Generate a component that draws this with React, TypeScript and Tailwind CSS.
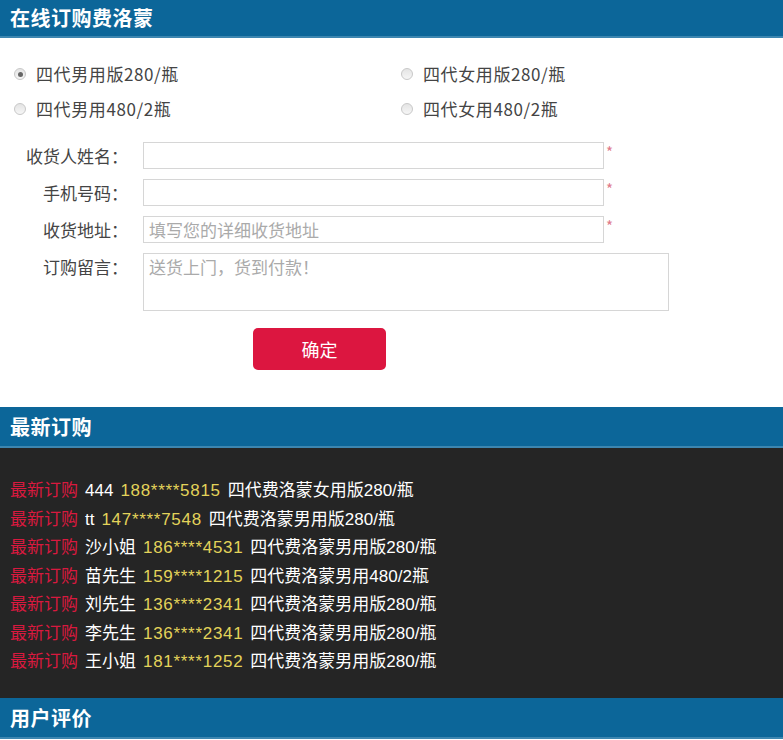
const FONT = { fontFamily: '"Noto Sans CJK SC", "Noto Sans", sans-serif' };
const MIXED = { fontFamily: '"Liberation Sans", "Noto Sans CJK SC", sans-serif' };

const options = [
  { label: "四代男用版280/瓶", checked: true },
  { label: "四代女用版280/瓶", checked: false },
  { label: "四代男用480/2瓶", checked: false },
  { label: "四代女用480/2瓶", checked: false },
];

const orders = [
  { name: "444", phone: "188****5815", item: "四代费洛蒙女用版280/瓶" },
  { name: "tt", phone: "147****7548", item: "四代费洛蒙男用版280/瓶" },
  { name: "沙小姐", phone: "186****4531", item: "四代费洛蒙男用版280/瓶" },
  { name: "苗先生", phone: "159****1215", item: "四代费洛蒙男用480/2瓶" },
  { name: "刘先生", phone: "136****2341", item: "四代费洛蒙男用版280/瓶" },
  { name: "李先生", phone: "136****2341", item: "四代费洛蒙男用版280/瓶" },
  { name: "王小姐", phone: "181****1252", item: "四代费洛蒙男用版280/瓶" },
];

function SectionTitle({ title, tall = false }: { title: string; tall?: boolean }) {
  return (
    <div
      className={`bg-[#0c6699] border-b-2 border-[#3d86b0] flex items-center pl-[10px] ${tall ? "h-[41px]" : "h-[38px]"}`}
    >
      <h2 className="text-white text-[20px] font-bold tracking-[0.5px]">{title}</h2>
    </div>
  );
}

function Radio({ checked }: { checked: boolean }) {
  return (
    <span className="w-[12px] h-[12px] rounded-full border border-[#c8c8c8] bg-gradient-to-b from-[#e4e4e4] to-[#f6f6f6] flex items-center justify-center">
      {checked && <span className="w-[5px] h-[5px] rounded-full bg-[#666]" />}
    </span>
  );
}

function Field({ label, placeholder, required = true, area = false }: { label: string; placeholder?: string; required?: boolean; area?: boolean }) {
  return (
    <div className="flex items-start">
      <label className="w-[128px] text-right text-[17px] text-[#444] leading-[27px] shrink-0">{label}</label>
      <div className="ml-[15px] flex items-start">
        {area ? (
          <div className="w-[526px] h-[58px] border border-[#d6d6d6] px-[5px] pt-[2px] text-[17px] text-[#aaa] leading-[22px]">
            {placeholder}
          </div>
        ) : (
          <div className="w-[461px] h-[27px] border border-[#d6d6d6] px-[5px] text-[17px] text-[#aaa] leading-[25px]">
            {placeholder}
          </div>
        )}
        {required && <span className="text-[#e07a8a] text-[15px] leading-[20px] ml-[2px]">*</span>}
      </div>
    </div>
  );
}

export default function App() {
  return (
    <div className="w-[783px] h-[740px] overflow-hidden bg-white" style={FONT}>
      <SectionTitle title="在线订购费洛蒙" />

      <div className="grid grid-cols-[387px_1fr] pl-[14px] pt-[25px] gap-y-[13px]">
        {options.map((o) => (
          <div key={o.label} className="flex items-center gap-[10px] h-[22px]">
            <Radio checked={o.checked} />
            <span className="text-[17px] tracking-[0.6px] text-[#444]">{o.label}</span>
          </div>
        ))}
      </div>

      <div className="flex flex-col gap-[10px] pt-[22px]">
        <Field label="收货人姓名：" />
        <Field label="手机号码：" />
        <Field label="收货地址：" placeholder="填写您的详细收货地址" />
        <Field label="订购留言：" placeholder="送货上门，货到付款！" required={false} area />
      </div>

      <div className="pl-[253px] pt-[17px] pb-[37px]">
        <button className="w-[133px] h-[42px] rounded-[5px] bg-[#dc1640] text-white text-[18px]">确定</button>
      </div>

      <SectionTitle title="最新订购" tall />

      <div className="bg-[#252525] pt-[29px] pb-[22px] pl-[10px] h-[250px]" style={MIXED}>
        {orders.map((o, i) => (
          <div key={i} className="flex gap-[7px] text-[17px] leading-[28.5px] whitespace-nowrap">
            <span className="text-[#d9193f]">最新订购</span>
            <span className="text-white">{o.name}</span>
            <span className="text-[#e3d35a] tracking-[0.7px]">{o.phone}</span>
            <span className="text-white">{o.item}</span>
          </div>
        ))}
      </div>

      <SectionTitle title="用户评价" tall />
    </div>
  );
}
